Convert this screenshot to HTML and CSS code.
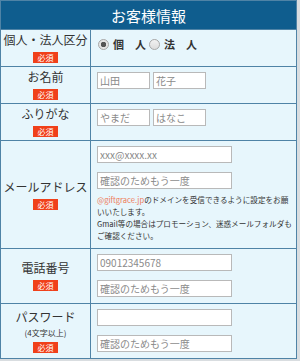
FILE: index.html
```html
<!DOCTYPE html>
<html lang="ja">
<head>
    <meta charset="UTF-8">
    <meta name="viewport" content="width=device-width, initial-scale=1.0">
    <title>お客様情報</title>
    <link rel="stylesheet" href="styles.css">
</head>
<body>
    <table class="form-table">
        <colgroup>
            <col class="col-label">
            <col>
        </colgroup>
        <tr>
            <th class="form-head" colspan="2">お客様情報</th>
        </tr>
        <tr>
            <th class="label-cell">
                <div class="label">個人・法人区分</div>
                <span class="required">必須</span>
            </th>
            <td class="field-cell">
                <div class="radios">
                    <label class="radio"><input type="radio" name="kind" checked>個　人</label>
                    <label class="radio"><input type="radio" name="kind">法　人</label>
                </div>
            </td>
        </tr>
        <tr>
            <th class="label-cell">
                <div class="label">お名前</div>
                <span class="required">必須</span>
            </th>
            <td class="field-cell">
                <div class="pair">
                    <input class="text short" type="text" placeholder="山田">
                    <input class="text short" type="text" placeholder="花子">
                </div>
            </td>
        </tr>
        <tr>
            <th class="label-cell">
                <div class="label">ふりがな</div>
                <span class="required">必須</span>
            </th>
            <td class="field-cell">
                <div class="pair">
                    <input class="text short" type="text" placeholder="やまだ">
                    <input class="text short" type="text" placeholder="はなこ">
                </div>
            </td>
        </tr>
        <tr>
            <th class="label-cell">
                <div class="label">メールアドレス</div>
                <span class="required">必須</span>
            </th>
            <td class="field-cell">
                <div class="stack">
                    <input class="text long" type="text" placeholder="xxx@xxxx.xx">
                    <input class="text long" type="text" placeholder="確認のためもう一度">
                </div>
                <p class="note"><span class="domain">@giftgrace.jp</span>のドメインを受信できるように設定をお願<br>いいたします。<br>Gmail等の場合はプロモーション、迷惑メールフォルダも<br>ご確認ください。</p>
            </td>
        </tr>
        <tr>
            <th class="label-cell">
                <div class="label">電話番号</div>
                <span class="required">必須</span>
            </th>
            <td class="field-cell">
                <div class="stack">
                    <input class="text long" type="text" placeholder="09012345678">
                    <input class="text long" type="text" placeholder="確認のためもう一度">
                </div>
            </td>
        </tr>
        <tr>
            <th class="label-cell">
                <div class="label">パスワード</div>
                <div class="sub">(4文字以上)</div>
                <span class="required">必須</span>
            </th>
            <td class="field-cell">
                <div class="stack">
                    <input class="text long" type="password">
                    <input class="text long" type="text" placeholder="確認のためもう一度">
                </div>
            </td>
        </tr>
    </table>
</body>
</html>
```

FILE: styles.css
```css
:root {
    --head: #0f5d8e;
    --row: #e7f6fc;
    --line: #4f83a6;
    --text: #333333;
    --badge: #f0401a;
}

body {
    margin: 0;
    background-color: #d9dde0;
    font-family: 'Noto Sans CJK JP', 'Noto Sans', sans-serif;
    color: var(--text);
}

.form-table {
    width: 297px;
    table-layout: fixed;
    border-collapse: collapse;
    background-color: var(--row);
}

.col-label {
    width: 90px;
}

.form-table th,
.form-table td {
    border: 1px solid var(--line);
}

.form-head {
    background-color: var(--head);
    color: #ffffff;
    font-size: 15px;
    font-weight: normal;
    height: 28px;
    padding: 0;
    text-align: center;
}

.label-cell {
    padding: 2px 0 3px;
    font-weight: normal;
    text-align: center;
    vertical-align: middle;
}

.label {
    font-size: 12px;
    line-height: 16px;
}

.sub {
    font-size: 8px;
    line-height: 11px;
    margin-top: 2px;
}

.required {
    display: block;
    width: 25px;
    margin: 4px auto 0;
    background-color: var(--badge);
    color: #ffffff;
    font-size: 8px;
    line-height: 11px;
    text-align: center;
}

.field-cell {
    padding: 5px 6px 6px;
    vertical-align: top;
}

.radios {
    display: flex;
    gap: 2px;
    padding-top: 2px;
}

.radio {
    display: flex;
    align-items: center;
    font-size: 11px;
    font-weight: bold;
    line-height: 14px;
}

.radio input {
    appearance: none;
    width: 11px;
    height: 11px;
    margin: 0 4px 0 1px;
    border: 1px solid #a8a8a8;
    border-radius: 50%;
    background: linear-gradient(#f2f2f2, #dcdcdc);
}

.radio input:checked {
    background: radial-gradient(circle, #555555 0 2.5px, #e4e4e4 3px);
}

.pair {
    display: flex;
    gap: 3px;
}

.stack {
    display: flex;
    flex-direction: column;
    gap: 9px;
}

.text {
    box-sizing: border-box;
    height: 17px;
    padding: 0 2px;
    border: 1px solid #b9b9b9;
    background-color: #ffffff;
    font-family: inherit;
    font-size: 10px;
    color: var(--text);
}

.text::placeholder {
    color: #8a8a8a;
}

.short {
    width: 53px;
}

.long {
    width: 135px;
}

.note {
    margin: 5px 0 0;
    font-size: 7.6px;
    line-height: 12px;
    white-space: nowrap;
}

.domain {
    color: #ee7c5a;
}
```
